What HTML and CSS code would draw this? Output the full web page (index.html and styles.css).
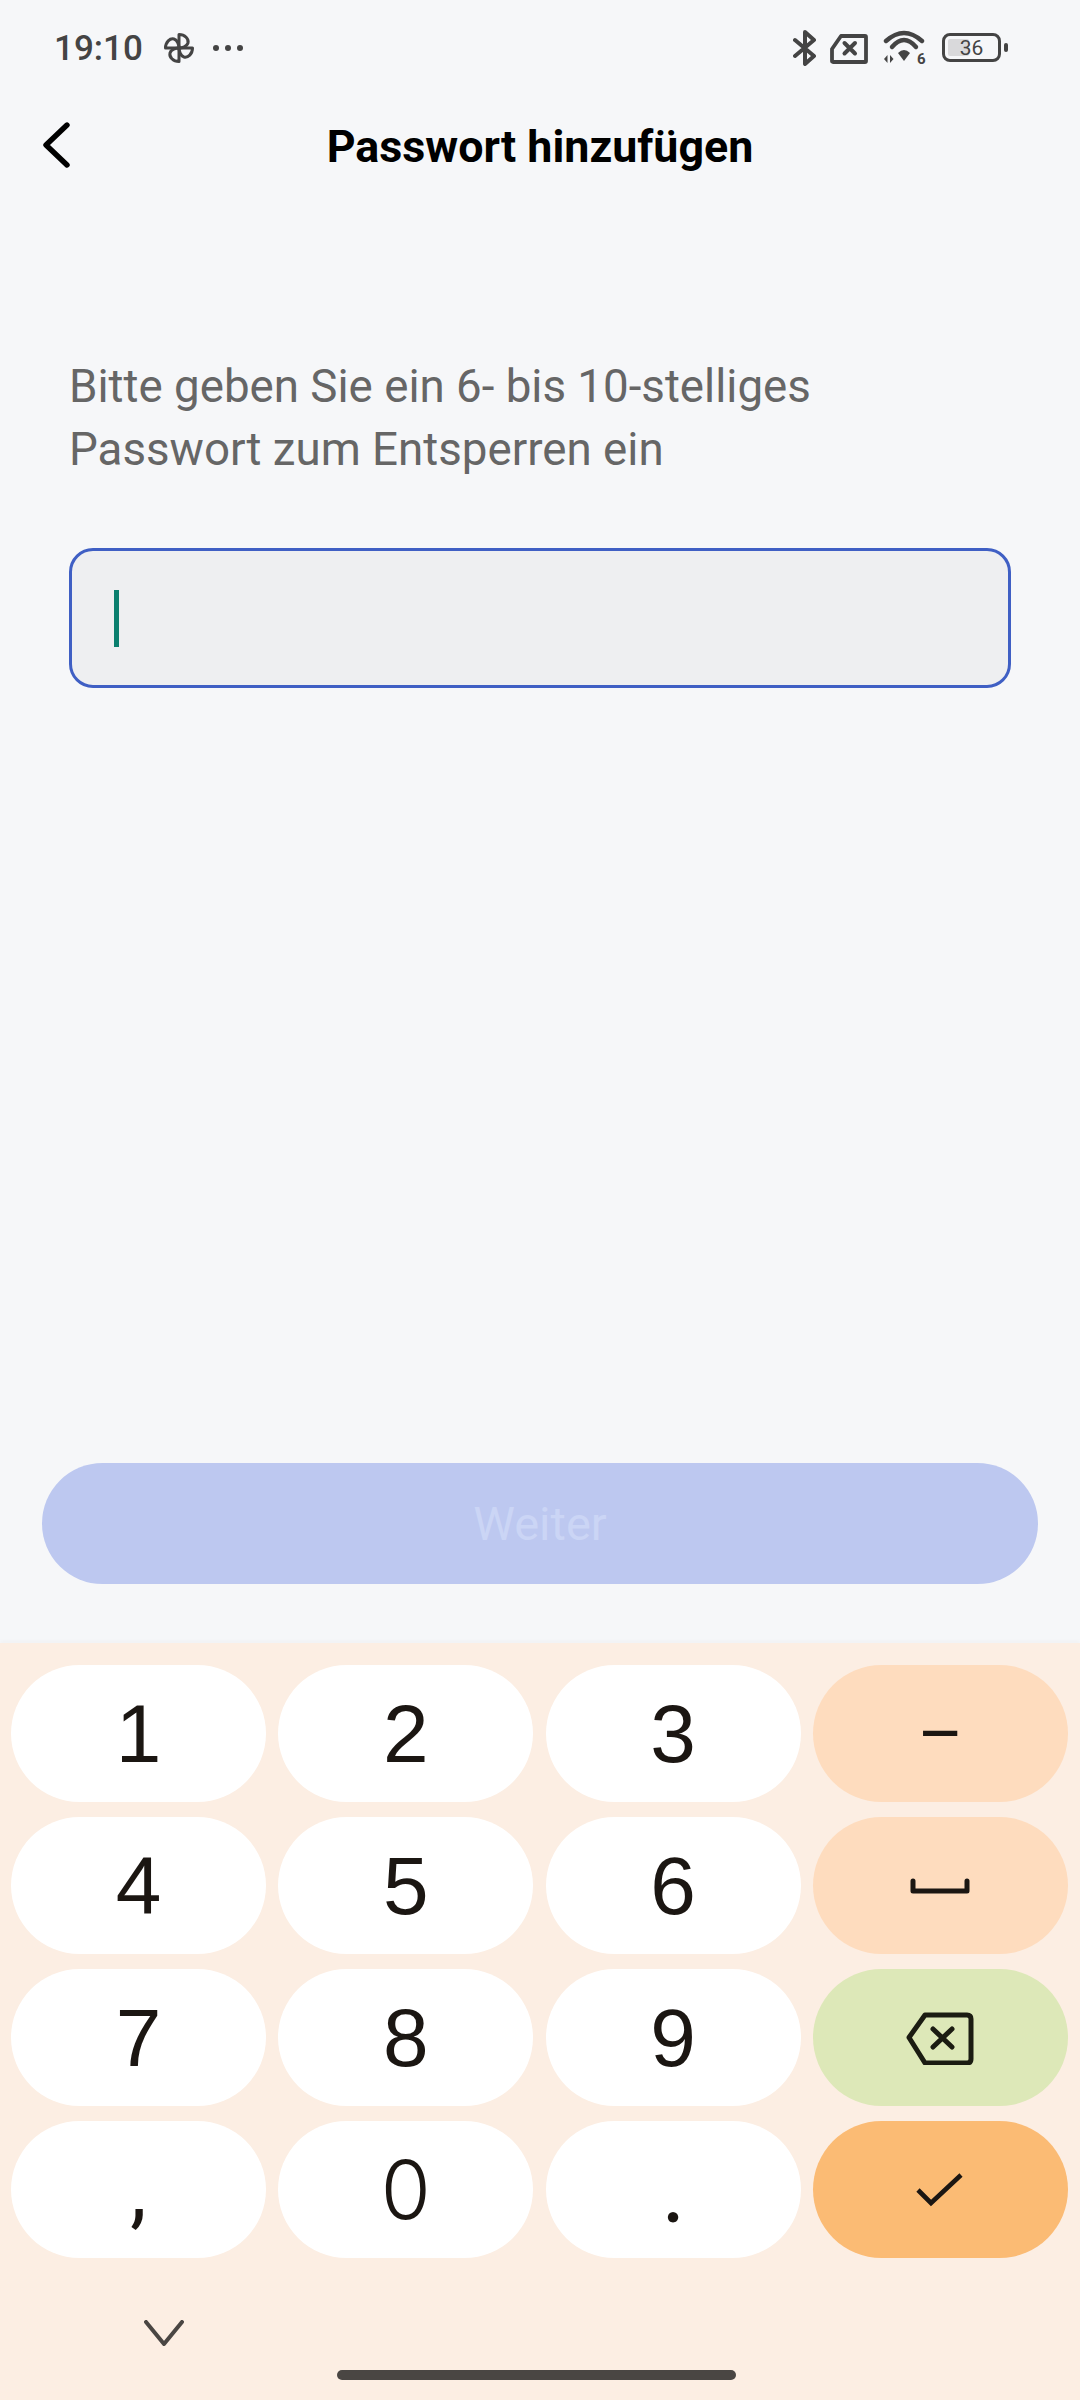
FILE: index.html
```html
<!DOCTYPE html>
<html lang="de">
<head>
    <meta charset="UTF-8">
    <title>Passwort hinzufügen</title>
    <link rel="stylesheet" href="styles.css">
</head>
<body>
<div class="page">
    <div class="status">
        <span class="time">19:10</span>
        <svg class="fan" width="32" height="32" viewBox="0 0 32 32">
            <g fill="none" stroke="#444" stroke-width="3" stroke-linejoin="round">
                <path d="M16 16V2.500C22 2.500 26 7 25 11C24 14.500 19 16 16 16Z"/>
                <path d="M16 16V2.500C22 2.500 26 7 25 11C24 14.500 19 16 16 16Z" transform="rotate(90 16 16)"/>
                <path d="M16 16V2.500C22 2.500 26 7 25 11C24 14.500 19 16 16 16Z" transform="rotate(180 16 16)"/>
                <path d="M16 16V2.500C22 2.500 26 7 25 11C24 14.500 19 16 16 16Z" transform="rotate(270 16 16)"/>
            </g>
        </svg>
        <svg class="dots" width="32" height="8" viewBox="0 0 32 8" fill="#444">
            <circle cx="4" cy="4" r="3"/><circle cx="16" cy="4" r="3"/><circle cx="28" cy="4" r="3"/>
        </svg>
        <div class="status-right">
            <svg width="24" height="36" viewBox="0 0 24 36" fill="none" stroke="#444" stroke-width="4" stroke-linecap="round" stroke-linejoin="round">
                <path d="M2 10L21 26L12 34V2L21 10L2 26"/>
            </svg>
            <svg class="sim" width="38" height="30" viewBox="0 0 38 30" fill="none" stroke="#444" stroke-width="3.8" stroke-linejoin="round">
                <path d="M2 15L11 2H35Q36 2 36 3V27Q36 28 35 28H3Q2 28 2 27Z"/>
                <path d="M14.500 9L25 19.500M25 9L14.500 19.500" stroke-width="4" stroke-linecap="round"/>
            </svg>
            <div class="wifi">
                <svg width="44" height="36" viewBox="0 0 44 36" fill="none" stroke="#444" stroke-width="4.4" stroke-linecap="round">
                    <path d="M3 11Q21 -5 39 11"/>
                    <path d="M9 17Q21 3 33 17"/>
                    <path d="M15 23Q21 17 27 23L21 31Z" fill="#444" stroke="none"/>
                    <path d="M4.500 33V25L1 29ZM7 25V33L10.500 29Z" fill="#444" stroke="none"/>
                </svg>
                <span class="wifi-num">6</span>
            </div>
            <div class="battery"><div class="battery-box"><span class="battery-fill"></span><span class="battery-num">36</span></div><span class="battery-nub"></span></div>
        </div>
    </div>

    <div class="nav">
        <svg class="back" width="28" height="46" viewBox="0 0 28 46" fill="none" stroke="#000" stroke-width="5.400" stroke-linecap="round" stroke-linejoin="round">
            <path d="M25 3L4 23L25 43"/>
        </svg>
        <h1>Passwort hinzufügen</h1>
    </div>

    <div class="content">
        <p class="hint">Bitte geben Sie ein 6- bis 10-stelliges<br>Passwort zum Entsperren ein</p>
        <div class="field"><span class="cursor"></span></div>
    </div>

    <button class="next">Weiter</button>

    <div class="keyboard">
        <div class="keys">
            <div class="key">1</div>
            <div class="key">2</div>
            <div class="key">3</div>
            <div class="key side dash">–</div>
            <div class="key">4</div>
            <div class="key">5</div>
            <div class="key">6</div>
            <div class="key side">
                <svg width="60" height="16" viewBox="0 0 60 16" fill="none" stroke="#1b1612" stroke-width="5" stroke-linejoin="round" stroke-linecap="round">
                    <path d="M3 3V13H57V3"/>
                </svg>
            </div>
            <div class="key">7</div>
            <div class="key">8</div>
            <div class="key">9</div>
            <div class="key del">
                <svg width="68" height="54" viewBox="0 0 68 54" fill="none" stroke="#1b1c12" stroke-width="5" stroke-linejoin="round" stroke-linecap="round">
                    <path d="M3 26.500L19 4H61Q65 4 65 8V48Q65 52 61 52H19Z"/>
                    <path d="M27 18L46 36M46 18L27 36"/>
                </svg>
            </div>
            <div class="key comma">,</div>
            <div class="key zero">0</div>
            <div class="key dot">.</div>
            <div class="key ok">
                <svg width="48" height="36" viewBox="0 0 48 36" fill="none" stroke="#1b1612" stroke-width="4.600">
                    <path d="M2 18L15 31L45 3"/>
                </svg>
            </div>
        </div>
        <svg class="hide" width="40" height="26" viewBox="0 0 40 26" fill="none" stroke="#4a4643" stroke-width="4" stroke-linecap="round" stroke-linejoin="round">
            <path d="M2 2L20 24L38 2"/>
        </svg>
        <div class="home"></div>
    </div>
</div>
</body>
</html>
```

FILE: styles.css
```css
* {
    margin: 0;
    padding: 0;
    box-sizing: border-box;
}
body {
    background: #f6f7f9;
    font-family: Roboto, "Liberation Sans", sans-serif;
}
.page {
    width: 1080px;
    height: 2400px;
    display: flex;
    flex-direction: column;
    overflow: hidden;
}

/* status bar */
.status {
    height: 96px;
    padding: 30px 72px 0 54px;
    display: flex;
    align-items: flex-start;
    color: #444;
}
.time {
    font-size: 35px;
    line-height: 36px;
    margin-top: 1px;
    font-weight: 500;
    width: 109px;
}
.fan {
    margin-top: 2px;
}
.dots {
    margin: 14px 0 0 17px;
}
.status-right {
    margin-left: auto;
    display: flex;
    align-items: flex-start;
}
.sim {
    margin: 4px 0 0 13px;
}
.wifi {
    margin-left: 15px;
    position: relative;
    width: 44px;
    height: 36px;
}
.wifi-num {
    position: absolute;
    left: 34px;
    top: 21px;
    font-size: 15px;
    line-height: 16px;
    font-weight: 700;
    color: #444;
}
.battery {
    margin: 3px 0 0 15px;
    display: flex;
    align-items: center;
}
.battery-box {
    width: 59px;
    height: 29px;
    border: 3.4px solid #444;
    border-radius: 8px;
    position: relative;
    display: flex;
    align-items: center;
    justify-content: center;
}
.battery-fill {
    position: absolute;
    left: 3px;
    top: 3px;
    bottom: 3px;
    width: 21px;
    background: #d9d9db;
    border-radius: 2px;
}
.battery-num {
    position: relative;
    font-size: 21px;
    line-height: 22px;
    color: #444;
}
.battery-nub {
    width: 4px;
    height: 9px;
    margin-left: 3px;
    background: #444;
    border-radius: 2px;
}

/* title bar */
.nav {
    height: 100px;
    padding-left: 42px;
    display: flex;
    align-items: center;
}
.back {
    margin-top: -3px;
}
.nav h1 {
    flex: 1;
    margin-left: -70px;
    text-align: center;
    font-size: 44.800px;
    font-weight: 700;
    color: #000;
}

/* hint and input */
.content {
    flex: 1;
    padding: 159px 69px 0;
}
.hint {
    font-size: 45.700px;
    line-height: 63px;
    color: #666;
}
.field {
    margin-top: 67px;
    height: 140px;
    background: #eeeff1;
    border: 3px solid #3f5fc4;
    border-radius: 24px;
    padding-left: 42px;
    display: flex;
    align-items: center;
}
.cursor {
    width: 5px;
    height: 57px;
    background: #0a7f6e;
}

.next {
    display: block;
    flex: none;
    height: 121px;
    margin: 0 42px 59px;
    border: 0;
    border-radius: 61px;
    background: #bdc8f0;
    color: #cbd5f5;
    font-family: Roboto, sans-serif;
    font-size: 47px;
    font-weight: 400;
}

/* keyboard */
.keyboard {
    flex: none;
    height: 757px;
    padding-top: 22px;
    background: #fceee3;
    box-shadow: 0 -3px 3px rgba(0, 0, 0, 0.02);
}
.keys {
    padding: 0 11px;
    display: grid;
    grid-template-columns: repeat(4, 255px);
    grid-auto-rows: 137px;
    column-gap: 12.330px;
    row-gap: 15px;
}
.key {
    background: #fff;
    border-radius: 69px;
    display: flex;
    align-items: center;
    justify-content: center;
    font-family: "Liberation Sans", sans-serif;
    font-size: 82px;
    color: #1b1612;
}
.comma {
    font-family: Roboto, sans-serif;
    font-size: 83px;
}
.zero {
    font-family: Inter, sans-serif;
    font-size: 81px;
    font-weight: 300;
}
.dot {
    font-family: Lato, sans-serif;
    font-size: 83px;
}
.side {
    background: #fedcbe;
}
.dash {
    font-family: Roboto, sans-serif;
    font-size: 70px;
}
.del {
    background: #dde8b8;
}
.ok {
    background: #fbbb74;
}
.hide {
    display: block;
    margin: 62px 0 0 144px;
}
.home {
    width: 399px;
    height: 10px;
    margin: 24px 0 0 337px;
    background: #4a4643;
    border-radius: 5px;
}
```
